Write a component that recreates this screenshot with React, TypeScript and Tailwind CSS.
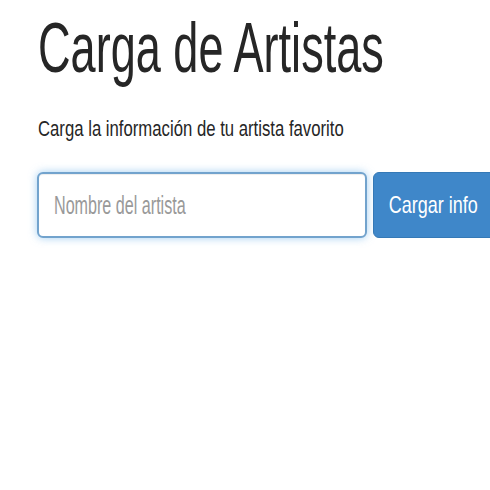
export default function App() {
  return (
    <div className="w-[490px] h-[490px] overflow-hidden bg-white text-[#262626] font-['Liberation_Sans',Arial,sans-serif]">
      <div className="pl-[38px] pt-[12px]">
        <h1 className="text-[71px] leading-none font-normal whitespace-nowrap">
          <span className="inline-block origin-left scale-x-[0.635]">Carga de Artistas</span>
        </h1>
        <p className="mt-[35px] text-[22px] leading-none whitespace-nowrap">
          <span className="inline-block origin-left scale-x-[0.76]">Carga la información de tu artista favorito</span>
        </p>
      </div>
      <div className="mt-[32px] ml-[37px] flex gap-[6px] w-[600px]">
        <div className="w-[330px] h-[66px] shrink-0 flex items-center px-[15px] border-2 border-[#72a3cd] rounded-[6px] bg-white shadow-[inset_0_1px_1px_rgba(0,0,0,0.075),0_0_8px_rgba(102,175,233,0.6)]">
          <span className="inline-block origin-left scale-x-[0.62] text-[26px] text-[#999] whitespace-nowrap">Nombre del artista</span>
        </div>
        <button className="w-[120px] h-[66px] shrink-0 flex items-center justify-center bg-[#3f87c9] border border-[#3579b6] rounded-l-[6px] text-white">
          <span className="inline-block scale-x-[0.75] text-[24px] whitespace-nowrap">Cargar info</span>
        </button>
      </div>
    </div>
  );
}
